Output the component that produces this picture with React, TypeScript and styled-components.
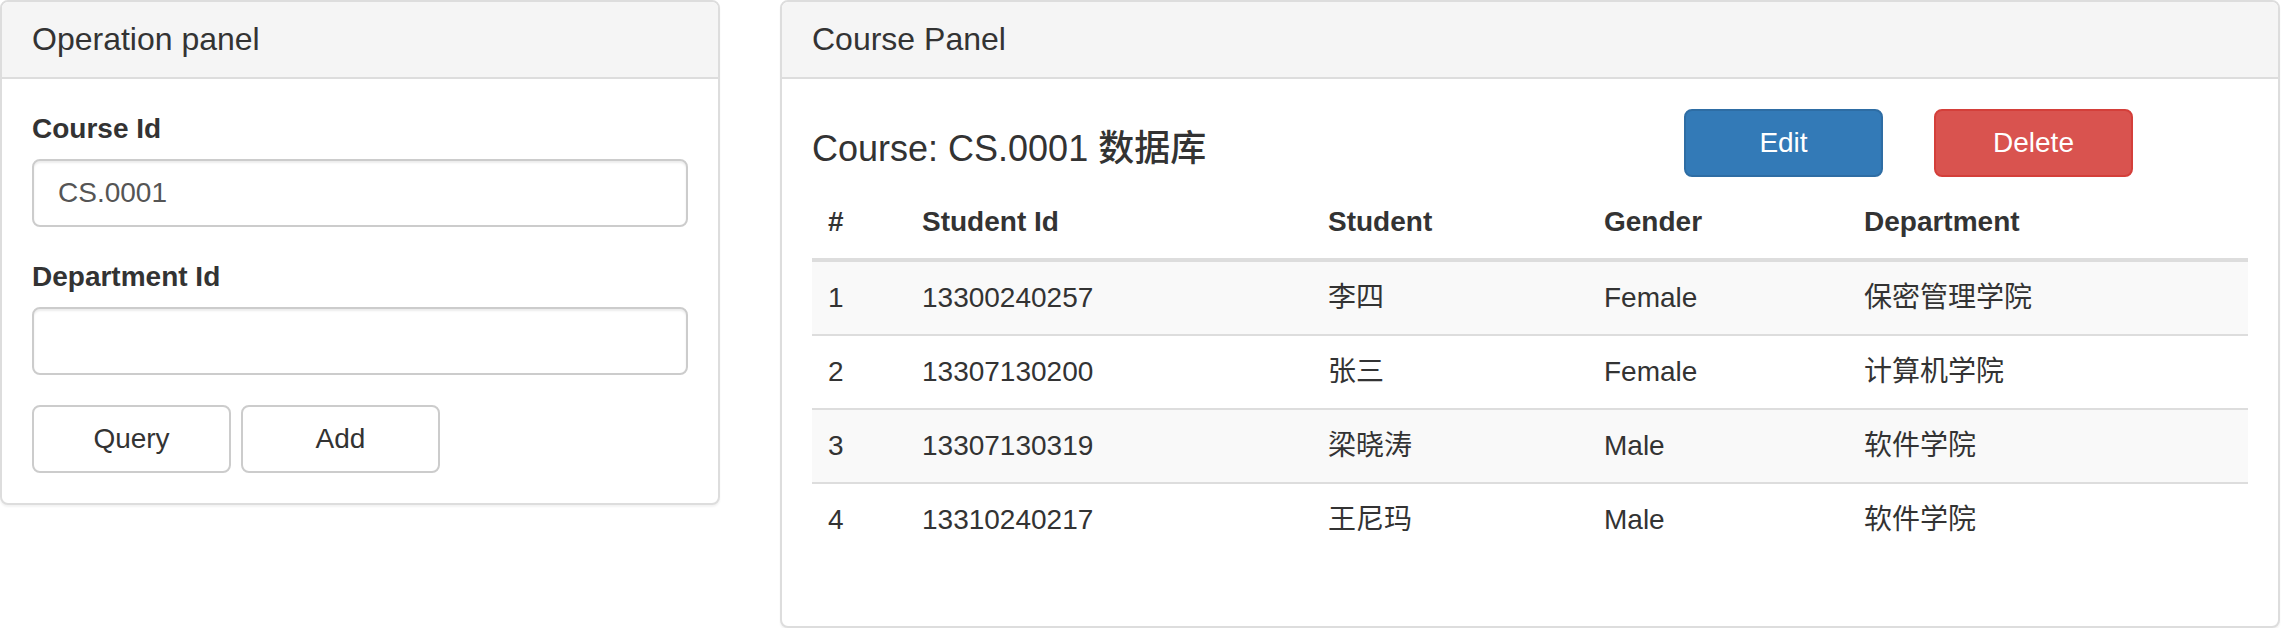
import React from 'react'
import styled, { createGlobalStyle, css } from 'styled-components'

const GlobalStyle = createGlobalStyle`
  * {
    box-sizing: border-box;
  }
  body {
    margin: 0;
    background: #fff;
    color: #333;
    font-family: 'Liberation Sans', 'Noto Sans CJK SC', Arial, sans-serif;
    font-size: 28px;
    line-height: 40px;
  }
`

const Page = styled.div`
  display: grid;
  grid-template-columns: 720px 1500px;
  column-gap: 60px;
  align-items: start;
`

const Panel = styled.section`
  background: #fff;
  border: 2px solid #ddd;
  border-radius: 8px;
  box-shadow: 0 2px 2px rgba(0, 0, 0, 0.05);
`

const PanelHeading = styled.div`
  padding: 20px 30px;
  background: #f5f5f5;
  border-bottom: 2px solid #ddd;
  border-radius: 6px 6px 0 0;
`

const PanelTitle = styled.h3`
  margin: 0;
  font-size: 32px;
  font-weight: normal;
  line-height: 1.1;
  color: #333;
`

const PanelBody = styled.div`
  padding: 30px;
`

const FormGroup = styled.div`
  margin-bottom: 30px;
`

const Label = styled.label`
  display: inline-block;
  margin-bottom: 10px;
  font-weight: bold;
`

const TextInput = styled.input`
  display: block;
  width: 100%;
  height: 68px;
  padding: 12px 24px;
  font-family: inherit;
  font-size: 28px;
  line-height: 40px;
  color: #555;
  background: #fff;
  border: 2px solid #ccc;
  border-radius: 8px;
  box-shadow: inset 0 2px 2px rgba(0, 0, 0, 0.075);
  outline: none;
`

const ButtonRow = styled.div`
  display: flex;
  gap: 10px;
`

type Variant = 'default' | 'primary' | 'danger'

const variants = {
  default: css`
    color: #333;
    background: #fff;
    border-color: #ccc;
  `,
  primary: css`
    color: #fff;
    background: #337ab7;
    border-color: #2e6da4;
  `,
  danger: css`
    color: #fff;
    background: #d9534f;
    border-color: #d43f3a;
  `,
}

const Button = styled.button<{ $variant?: Variant }>`
  display: inline-flex;
  align-items: center;
  justify-content: center;
  width: 199px;
  height: 68px;
  padding: 12px 24px;
  font-family: inherit;
  font-size: 28px;
  line-height: 40px;
  border: 2px solid;
  border-radius: 8px;
  cursor: pointer;
  ${({ $variant = 'default' }) => variants[$variant]}
`

const CourseBar = styled.div`
  display: flex;
  align-items: flex-start;
  gap: 51px;
  padding-right: 115px;
`

const CourseTitle = styled.h4`
  margin: 20px auto 17px 0;
  font-size: 36px;
  font-weight: 500;
  line-height: 1.1;
`

const Table = styled.table`
  width: 100%;
  margin-bottom: 40px;
  border-collapse: collapse;
  border-spacing: 0;

  th,
  td {
    padding: 16px;
    line-height: 40px;
    text-align: left;
    vertical-align: top;
  }

  th {
    vertical-align: bottom;
    font-weight: bold;
    border-bottom: 4px solid #ddd;
  }

  td {
    border-top: 2px solid #ddd;
  }

  tbody tr:nth-of-type(odd) {
    background: #f9f9f9;
  }
`

const Col = styled.col<{ $w: number }>`
  width: ${({ $w }) => $w}px;
`

const students = [
  { id: '13300240257', name: '李四', gender: 'Female', dept: '保密管理学院' },
  { id: '13307130200', name: '张三', gender: 'Female', dept: '计算机学院' },
  { id: '13307130319', name: '梁晓涛', gender: 'Male', dept: '软件学院' },
  { id: '13310240217', name: '王尼玛', gender: 'Male', dept: '软件学院' },
]

const OperationPanel = () => (
  <Panel>
    <PanelHeading>
      <PanelTitle>Operation panel</PanelTitle>
    </PanelHeading>
    <PanelBody>
      <FormGroup>
        <Label>Course Id</Label>
        <TextInput defaultValue="CS.0001" />
      </FormGroup>
      <FormGroup>
        <Label>Department Id</Label>
        <TextInput />
      </FormGroup>
      <ButtonRow>
        <Button>Query</Button>
        <Button>Add</Button>
      </ButtonRow>
    </PanelBody>
  </Panel>
)

const CoursePanel = () => (
  <Panel>
    <PanelHeading>
      <PanelTitle>Course Panel</PanelTitle>
    </PanelHeading>
    <PanelBody>
      <CourseBar>
        <CourseTitle>Course: CS.0001 数据库</CourseTitle>
        <Button $variant="primary">Edit</Button>
        <Button $variant="danger">Delete</Button>
      </CourseBar>
      <Table>
        <colgroup>
          <Col $w={94} />
          <Col $w={406} />
          <Col $w={276} />
          <Col $w={260} />
          <Col $w={400} />
        </colgroup>
        <thead>
          <tr>
            <th>#</th>
            <th>Student Id</th>
            <th>Student</th>
            <th>Gender</th>
            <th>Department</th>
          </tr>
        </thead>
        <tbody>
          {students.map((s, i) => (
            <tr key={s.id}>
              <td>{i + 1}</td>
              <td>{s.id}</td>
              <td>{s.name}</td>
              <td>{s.gender}</td>
              <td>{s.dept}</td>
            </tr>
          ))}
        </tbody>
      </Table>
    </PanelBody>
  </Panel>
)

export default function App() {
  return (
    <>
      <GlobalStyle />
      <Page>
        <OperationPanel />
        <CoursePanel />
      </Page>
    </>
  )
}
